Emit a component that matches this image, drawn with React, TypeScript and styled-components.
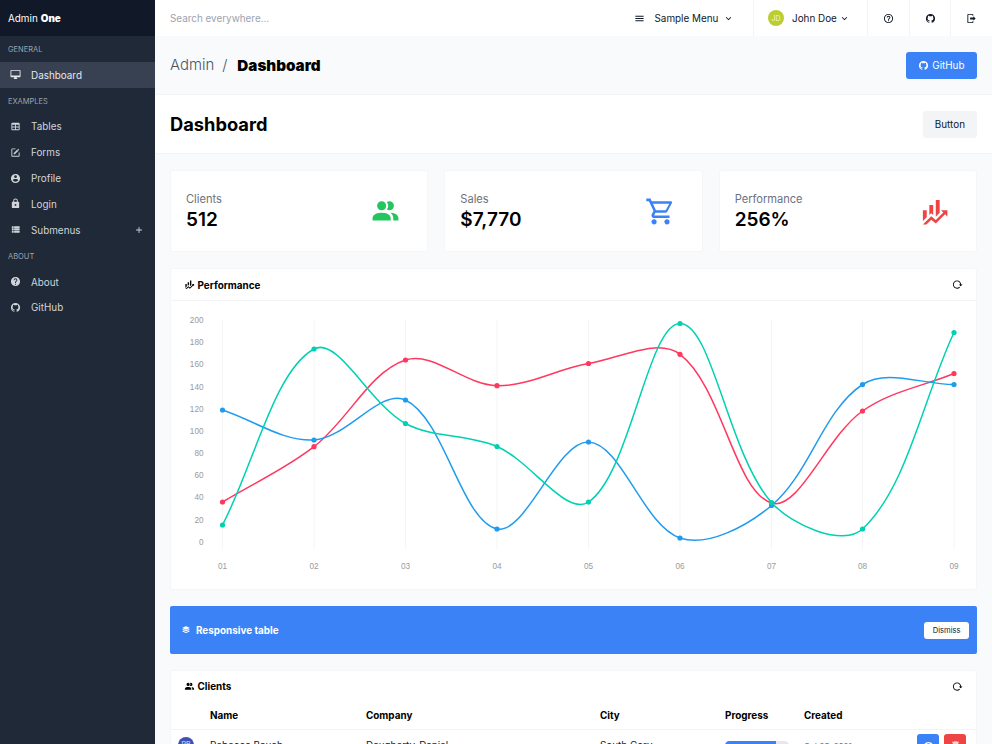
import React from 'react'
import styled, { createGlobalStyle } from 'styled-components'

const mdi = {
  desktop: 'M21,14H3V4H21M21,2H3C1.89,2 1,2.89 1,4V16A2,2 0 0,0 3,18H10L8,21V22H16V21L14,18H21A2,2 0 0,0 23,16V4C23,2.89 22.1,2 21,2Z',
  table: 'M5,4H19A2,2 0 0,1 21,6V18A2,2 0 0,1 19,20H5A2,2 0 0,1 3,18V6A2,2 0 0,1 5,4M5,8V12H11V8H5M13,8V12H19V8H13M5,14V18H11V14H5M13,14V18H19V14H13Z',
  edit: 'M5,3C3.89,3 3,3.89 3,5V19A2,2 0 0,0 5,21H19A2,2 0 0,0 21,19V12H19V19H5V5H12V3H5M17.78,4C17.61,4 17.43,4.07 17.3,4.2L16.08,5.41L18.58,7.91L19.8,6.7C20.06,6.44 20.06,6 19.8,5.75L18.25,4.2C18.12,4.07 17.95,4 17.78,4M15.37,6.12L8,13.5V16H10.5L17.87,8.62L15.37,6.12Z',
  account: 'M12,19.2C9.5,19.2 7.29,17.92 6,16C6.03,14 10,12.9 12,12.9C14,12.9 17.97,14 18,16C16.71,17.92 14.5,19.2 12,19.2M12,5A3,3 0 0,1 15,8A3,3 0 0,1 12,11A3,3 0 0,1 9,8A3,3 0 0,1 12,5M12,2A10,10 0 0,0 2,12A10,10 0 0,0 12,22A10,10 0 0,0 22,12C22,6.47 17.5,2 12,2Z',
  lock: 'M12,17A2,2 0 0,0 14,15C14,13.89 13.1,13 12,13A2,2 0 0,0 10,15A2,2 0 0,0 12,17M18,8A2,2 0 0,1 20,10V20A2,2 0 0,1 18,22H6A2,2 0 0,1 4,20V10C4,8.89 4.9,8 6,8H7V6A5,5 0 0,1 12,1A5,5 0 0,1 17,6V8H18M12,3A3,3 0 0,0 9,6V8H15V6A3,3 0 0,0 12,3Z',
  list: 'M9,5V9H21V5M9,19H21V15H9M9,14H21V10H9M4,9H8V5H4M4,19H8V15H4M4,14H8V10H4V14Z',
  help: 'M15.07,11.25L14.17,12.17C13.45,12.89 13,13.5 13,15H11V14.5C11,13.39 11.45,12.39 12.17,11.67L13.41,10.41C13.78,10.05 14,9.55 14,9C14,7.89 13.1,7 12,7A2,2 0 0,0 10,9H8A4,4 0 0,1 12,5A4,4 0 0,1 16,9C16,9.88 15.64,10.67 15.07,11.25M13,19H11V17H13M12,2A10,10 0 0,0 2,12A10,10 0 0,0 12,22A10,10 0 0,0 22,12C22,6.47 17.5,2 12,2Z',
  helpOutline: 'M11,18H13V16H11V18M12,2A10,10 0 0,0 2,12A10,10 0 0,0 12,22A10,10 0 0,0 22,12A10,10 0 0,0 12,2M12,20C7.59,20 4,16.41 4,12C4,7.59 7.59,4 12,4C16.41,4 20,7.59 20,12C20,16.41 16.41,20 12,20M12,6A4,4 0 0,0 8,10H10A2,2 0 0,1 12,8A2,2 0 0,1 14,10C14,12 11,11.75 11,15H13C13,12.75 16,12.5 16,10A4,4 0 0,0 12,6Z',
  github: 'M12,2A10,10 0 0,0 2,12C2,16.42 4.87,20.17 8.84,21.5C9.34,21.58 9.5,21.27 9.5,21C9.5,20.77 9.5,20.14 9.5,19.31C6.73,19.91 6.14,17.97 6.14,17.97C5.68,16.81 5.03,16.5 5.03,16.5C4.12,15.88 5.1,15.9 5.1,15.9C6.1,15.97 6.63,16.93 6.63,16.93C7.5,18.45 8.97,18 9.54,17.76C9.63,17.11 9.89,16.67 10.17,16.42C7.95,16.17 5.62,15.31 5.62,11.5C5.62,10.39 6,9.5 6.65,8.79C6.55,8.54 6.2,7.5 6.75,6.15C6.75,6.15 7.59,5.88 9.5,7.17C10.29,6.95 11.15,6.84 12,6.84C12.85,6.84 13.71,6.95 14.5,7.17C16.41,5.88 17.25,6.15 17.25,6.15C17.8,7.5 17.45,8.54 17.35,8.79C18,9.5 18.38,10.39 18.38,11.5C18.38,15.32 16.04,16.16 13.81,16.41C14.17,16.72 14.5,17.33 14.5,18.26C14.5,19.6 14.5,20.68 14.5,21C14.5,21.27 14.66,21.59 15.17,21.5C19.14,20.16 22,16.42 22,12A10,10 0 0,0 12,2Z',
  logout: 'M16,17V14H9V10H16V7L21,12L16,17M14,2A2,2 0 0,1 16,4V6H14V4H5V20H14V18H16V20A2,2 0 0,1 14,22H5A2,2 0 0,1 3,20V4A2,2 0 0,1 5,2H14Z',
  menu: 'M3,6H21V8H3V6M3,11H21V13H3V11M3,16H21V18H3V16Z',
  chevron: 'M7.41,8.58L12,13.17L16.59,8.58L18,10L12,16L6,10L7.41,8.58Z',
  plus: 'M19,13H13V19H11V13H5V11H11V5H13V11H19V13Z',
  people: 'M16 17V19H2V17S2 13 9 13 16 17 16 17M12.5 7.5A3.5 3.5 0 1 0 9 11A3.5 3.5 0 0 0 12.5 7.5M15.94 13A5.32 5.32 0 0 1 18 17V19H22V17S22 13.37 15.94 13M15 4A3.39 3.39 0 0 0 13.07 4.59A5 5 0 0 1 13.07 10.41A3.39 3.39 0 0 0 15 11A3.5 3.5 0 0 0 15 4Z',
  cart: 'M17,18A2,2 0 0,1 19,20A2,2 0 0,1 17,22C15.89,22 15,21.1 15,20C15,18.89 15.89,18 17,18M1,2H4.27L5.21,4H20A1,1 0 0,1 21,5C21,5.17 20.95,5.34 20.88,5.5L17.3,11.97C16.96,12.58 16.3,13 15.55,13H8.1L7.2,14.63L7.17,14.75A0.25,0.25 0 0,0 7.42,15H19V17H7C5.89,17 5,16.1 5,15C5,14.65 5.09,14.32 5.24,14.04L6.6,11.59L3,4H1V2M7,18A2,2 0 0,1 9,20A2,2 0 0,1 7,22C5.89,22 5,21.1 5,20C5,18.89 5.89,18 7,18M16,11L18.78,6H6.14L8.5,11H16Z',
  finance: 'M6,16.5L3,19.44V11H6M11,14.66L9.43,13.32L8,14.64V7H11M16,13L13,16V3H16M18.81,12.81L17,11H22V16L20.21,14.21L13,21.36L9.53,18.34L5.75,22H3L9.47,15.66L13,18.64',
  reload: 'M2 12C2 16.97 6.03 21 11 21C13.39 21 15.68 20.06 17.4 18.4L15.9 16.9C14.63 18.25 12.86 19 11 19C4.76 19 1.64 11.46 6.05 7.05C10.46 2.64 18 5.77 18 12H15L19 16H19.1L23 12H20C20 7.03 15.97 3 11 3C6.03 3 2 7.03 2 12Z',
  buffer: 'M12.6,2.86L20.66,6.63C21.1,6.85 21.1,7.15 20.66,7.37L12.6,11.14C12.21,11.32 11.79,11.32 11.4,11.14L3.34,7.37C2.9,7.15 2.9,6.85 3.34,6.63L11.4,2.86C11.79,2.68 12.21,2.68 12.6,2.86M3.34,10.6L5.2,9.75L11.4,12.65C11.79,12.83 12.21,12.83 12.6,12.65L18.8,9.75L20.66,10.6C21.1,10.85 21.1,11.15 20.66,11.4L12.6,15.14C12.21,15.32 11.79,15.32 11.4,15.14L3.34,11.4C2.9,11.15 2.9,10.85 3.34,10.6M3.34,14.6L5.2,13.75L11.4,16.65C11.79,16.83 12.21,16.83 12.6,16.65L18.8,13.75L20.66,14.6C21.1,14.85 21.1,15.15 20.66,15.4L12.6,19.14C12.21,19.32 11.79,19.32 11.4,19.14L3.34,15.4C2.9,15.15 2.9,14.85 3.34,14.6Z',
  eye: 'M12,9A3,3 0 0,0 9,12A3,3 0 0,0 12,15A3,3 0 0,0 15,12A3,3 0 0,0 12,9M12,17A5,5 0 0,1 7,12A5,5 0 0,1 12,7A5,5 0 0,1 17,12A5,5 0 0,1 12,17M12,4.5C7,4.5 2.73,7.61 1,12C2.73,16.39 7,19.5 12,19.5C17,19.5 21.27,16.39 23,12C21.27,7.61 17,4.5 12,4.5Z',
  trash: 'M19,4H15.5L14.5,3H9.5L8.5,4H5V6H19M6,19A2,2 0 0,0 8,21H16A2,2 0 0,0 18,19V7H6V19Z'
}

const GlobalStyle = createGlobalStyle`
  html, body {
    margin: 0;
    height: 100%;
    overflow: hidden;
  }
  body {
    font-family: Inter, "Liberation Sans", sans-serif;
    font-size: 9.9px;
    color: #000;
    background: #f9fafb;
  }
  #root {
    height: 100%;
  }
`

const Shell = styled.div`
  display: flex;
  height: 744px;
  overflow: hidden;
`

const Aside = styled.aside`
  width: 155px;
  flex: none;
  background: #1f2937;
  color: #d1d5db;
`

const Brand = styled.div`
  height: 36px;
  display: flex;
  align-items: center;
  padding-left: 8px;
  background: #111827;
  color: #fff;
  b {
    font-weight: 900;
    margin-left: 3px;
  }
`

const MenuLabel = styled.p`
  height: 25.85px;
  box-sizing: border-box;
  margin: 0;
  padding: 1px 0 0 8px;
  display: flex;
  align-items: center;
  font-size: 7.5px;
  color: #9ca3af;
  text-transform: uppercase;
`

const MenuItem = styled.a<{ $active?: boolean }>`
  height: 25.85px;
  display: flex;
  align-items: center;
  background: ${({ $active }) => ($active ? '#374151' : 'transparent')};
  color: ${({ $active }) => ($active ? '#e5e7eb' : '#d1d5db')};
`

const MenuIcon = styled.span`
  width: 31px;
  display: flex;
  justify-content: center;
`

const MenuPlus = styled.span`
  margin-left: auto;
  margin-right: 11px;
  display: flex;
`

const Main = styled.div`
  flex: 1;
  min-width: 0;
  display: flex;
  flex-direction: column;
`

const TopBar = styled.header`
  height: 36px;
  flex: none;
  display: flex;
  background: #fff;
`

const Search = styled.div`
  flex: 1;
  display: flex;
  align-items: center;
  padding-left: 15px;
  color: #9ca3af;
`

const TopItem = styled.div<{ $width: number; $divider?: boolean; $inset?: number }>`
  width: ${({ $width }) => $width}px;
  display: flex;
  align-items: center;
  justify-content: ${({ $inset }) => ($inset ? 'flex-start' : 'center')};
  padding-left: ${({ $inset }) => $inset || 0}px;
  border-left: ${({ $divider }) => ($divider ? '1px solid #f3f4f6' : 'none')};
  color: #111827;
  box-sizing: border-box;
`

const MenuName = styled.span`
  margin: 0 5px 0 10px;
`

const UserName = styled.span`
  margin-right: 2.5px;
`

const Avatar = styled.span`
  width: 16px;
  height: 16px;
  border-radius: 50%;
  background: #bccd31;
  color: #f4f7d0;
  font-size: 7px;
  display: flex;
  align-items: center;
  justify-content: center;
  margin-right: 8px;
`

const TitleBar = styled.section`
  height: 59px;
  box-sizing: border-box;
  flex: none;
  padding: 0 15px;
  display: flex;
  align-items: center;
  justify-content: space-between;
  border-bottom: 1px solid #f3f4f6;
`

const Crumbs = styled.div`
  font-size: 14.9px;
  font-weight: 300;
  color: #4b5563;
  display: flex;
  align-items: center;
  gap: 8px;
  b {
    margin-left: 2px;
    font-size: 15.2px;
    font-weight: 900;
    color: #000;
  }
`

const HeroBar = styled.section`
  height: 59px;
  box-sizing: border-box;
  flex: none;
  padding: 0 15px;
  display: flex;
  align-items: center;
  justify-content: space-between;
  background: #fff;
  border-bottom: 1px solid #f3f4f6;
  h1 {
    margin: 0;
    font-size: 18.3px;
    font-weight: 700;
  }
`

const Button = styled.button<{ $kind: 'blue' | 'light' | 'white' }>`
  font-family: inherit;
  font-size: ${({ $kind }) => ($kind === 'white' ? '7.6px' : '9.9px')};
  height: ${({ $kind }) => ($kind === 'white' ? '17px' : '27px')};
  padding: 0 ${({ $kind }) => ({ blue: '12.5px', light: '12px', white: '8.5px' }[$kind])};
  border: none;
  border-radius: 3px;
  display: flex;
  align-items: center;
  gap: 3px;
  background: ${({ $kind }) => ({ blue: '#3b82f6', light: '#f3f4f6', white: '#fff' }[$kind])};
  color: ${({ $kind }) => ($kind === 'blue' ? '#fff' : '#111827')};
`

const Content = styled.main`
  padding: 16px 15px;
  display: flex;
  flex-direction: column;
  gap: 16px;
`

const StatGrid = styled.div`
  display: grid;
  grid-template-columns: repeat(3, 1fr);
  gap: 16px;
`

const Card = styled.div`
  background: #fff;
  border: 1px solid #f5f6f7;
  border-radius: 2px;
`

const StatCard = styled(Card)`
  height: 82px;
  box-sizing: border-box;
  padding: 0 15px;
  display: flex;
  align-items: center;
  justify-content: space-between;
`

const StatLabel = styled.div`
  font-size: 11.1px;
  line-height: 17px;
  color: #6b7280;
`

const StatValue = styled.div`
  font-size: 19px;
  line-height: 23px;
  font-weight: 600;
`

const StatIcon = styled.span<{ $color: string }>`
  display: flex;
  margin-right: 11px;
  color: ${({ $color }) => $color};
`

const CardHead = styled.div`
  height: 31px;
  padding: 0 13px;
  display: flex;
  align-items: center;
  justify-content: space-between;
  border-bottom: 1px solid #f3f4f6;
`

const CardTitle = styled.div`
  display: flex;
  align-items: center;
  gap: 2.5px;
  font-weight: 700;
`

const ChartCard = styled(Card)`
  height: 322px;
  box-sizing: border-box;
`

const ChartSvg = styled.svg`
  display: block;
`

const Notice = styled.div`
  height: 48px;
  box-sizing: border-box;
  background: #3b82f6;
  border-radius: 2px;
  color: #fff;
  display: flex;
  align-items: center;
  justify-content: space-between;
  padding: 0 8px 0 11px;
`

const NoticeText = styled.div`
  display: flex;
  align-items: center;
  gap: 5px;
  font-weight: 700;
`

const ClientsCard = styled(Card)`
  border-bottom: none;
`

const ClientHead = styled(CardHead)`
  border-bottom: none;
  height: 30px;
`

const Table = styled.table`
  width: 100%;
  border-collapse: collapse;
  table-layout: fixed;
  th {
    height: 28px;
    padding: 0;
    text-align: left;
    font-weight: 700;
    border-bottom: 1px solid #f3f4f6;
  }
  td {
    height: 30px;
    padding: 0;
    color: #111827;
  }
`

const RowAvatar = styled.span`
  display: block;
  width: 16px;
  height: 16px;
  margin-left: 7px;
  border-radius: 50%;
  background: #3f51b5;
  color: #dfe3f7;
  font-size: 7px;
  line-height: 16px;
  text-align: center;
`

const Progress = styled.div`
  width: 64px;
  height: 9px;
  border-radius: 4.5px;
  background: #e5e7eb;
  overflow: hidden;
`

const ProgressFill = styled.div`
  height: 100%;
  background: #3b82f6;
`

const Muted = styled.small`
  font-size: 8px;
  color: #6b7280;
`

const Actions = styled.div`
  display: flex;
  justify-content: flex-end;
  gap: 5px;
  padding-right: 10px;
`

const ActionButton = styled.button<{ $color: string }>`
  width: 22px;
  height: 22px;
  padding: 0;
  border: none;
  border-radius: 3px;
  display: flex;
  align-items: center;
  justify-content: center;
  background: ${({ $color }) => $color};
  color: #fff;
`

const Icon = ({ path, size = 11 }: { path: string; size?: number }) => (
  <svg width={size} height={size} viewBox="0 0 24 24" fill="currentColor" style={{ display: 'block' }}>
    <path d={path} />
  </svg>
)

const menus = [
  { label: 'General', items: [{ name: 'Dashboard', icon: mdi.desktop, active: true }] },
  {
    label: 'Examples',
    items: [
      { name: 'Tables', icon: mdi.table },
      { name: 'Forms', icon: mdi.edit },
      { name: 'Profile', icon: mdi.account },
      { name: 'Login', icon: mdi.lock },
      { name: 'Submenus', icon: mdi.list, more: true }
    ]
  },
  {
    label: 'About',
    items: [
      { name: 'About', icon: mdi.help },
      { name: 'GitHub', icon: mdi.github }
    ]
  }
]

const stats = [
  { label: 'Clients', value: '512', icon: mdi.people, color: '#22c55e' },
  { label: 'Sales', value: '$7,770', icon: mdi.cart, color: '#3b82f6' },
  { label: 'Performance', value: '256%', icon: mdi.finance, color: '#ef4444' }
]

// pixel positions read off the chart, relative to the card body
const ORIGIN_X = 171
const ORIGIN_Y = 301
const xs = [222.5, 314, 405.5, 497, 588.5, 680, 771.5, 862.5, 954].map((x) => x - ORIGIN_X)
const series = [
  { color: '#ff3860', ys: [502, 446.7, 360, 385.7, 363.5, 354.3, 503, 411, 373.5] },
  { color: '#209cee', ys: [410, 440, 400, 529, 442, 538, 505.5, 384.5, 384.5] },
  { color: '#00d1b2', ys: [525, 349, 423.5, 446.5, 502, 323.5, 502.5, 529, 332.5] }
].map((s) => ({ ...s, ys: s.ys.map((y) => y - ORIGIN_Y) }))

// same spline Chart.js uses for a tensioned line
function splinePath(ys: number[], tension = 0.35) {
  const pts = ys.map((y, i) => [xs[i], y])
  const out: number[][] = pts.map((p, i) => {
    const prev = pts[i - 1] || p
    const next = pts[i + 1] || p
    const d01 = Math.hypot(p[0] - prev[0], p[1] - prev[1])
    const d12 = Math.hypot(next[0] - p[0], next[1] - p[1])
    const s01 = d01 / (d01 + d12 || 1)
    const s12 = d12 / (d01 + d12 || 1)
    return [
      p[0] - tension * s01 * (next[0] - prev[0]),
      p[1] - tension * s01 * (next[1] - prev[1]),
      p[0] + tension * s12 * (next[0] - prev[0]),
      p[1] + tension * s12 * (next[1] - prev[1])
    ]
  })
  return pts
    .map((p, i) =>
      i === 0
        ? `M${p[0]} ${p[1]}`
        : `C${out[i - 1][2]} ${out[i - 1][3]} ${out[i][0]} ${out[i][1]} ${p[0]} ${p[1]}`
    )
    .join('')
}

const Chart = () => (
  <ChartSvg width="804" height="289">
    {xs.map((x) => (
      <line key={x} x1={x} x2={x} y1={19} y2={248} stroke="#f5f5f6" />
    ))}
    {[200, 180, 160, 140, 120, 100, 80, 60, 40, 20, 0].map((v) => (
      <text
        key={v}
        x={32.5}
        y={240.7 - v * 1.108 + 3}
        textAnchor="end"
        fontSize="8.2"
        fontFamily="Liberation Sans, sans-serif"
        fill="#9a9a9a"
      >
        {v}
      </text>
    ))}
    {xs.map((x, i) => (
      <text
        key={x}
        x={x}
        y={268}
        textAnchor="middle"
        fontSize="8.2"
        fontFamily="Liberation Sans, sans-serif"
        fill="#9a9a9a"
      >
        {`0${i + 1}`}
      </text>
    ))}
    {series.map((s) => (
      <g key={s.color}>
        <path d={splinePath(s.ys)} fill="none" stroke={s.color} strokeWidth="1.5" />
        {s.ys.map((y, i) => (
          <circle key={i} cx={xs[i]} cy={y} r="2.6" fill={s.color} />
        ))}
      </g>
    ))}
  </ChartSvg>
)

export default function App() {
  return (
    <Shell>
      <GlobalStyle />
      <Aside>
        <Brand>
          Admin <b>One</b>
        </Brand>
        {menus.map((menu) => (
          <React.Fragment key={menu.label}>
            <MenuLabel>{menu.label}</MenuLabel>
            {menu.items.map((item: any) => (
              <MenuItem key={item.name} $active={item.active}>
                <MenuIcon>
                  <Icon path={item.icon} />
                </MenuIcon>
                {item.name}
                {item.more && (
                  <MenuPlus>
                    <Icon path={mdi.plus} size={10} />
                  </MenuPlus>
                )}
              </MenuItem>
            ))}
          </React.Fragment>
        ))}
      </Aside>
      <Main>
        <TopBar>
          <Search>Search everywhere...</Search>
          <TopItem $width={133} $inset={13.5}>
            <Icon path={mdi.menu} />
            <MenuName>Sample Menu</MenuName>
            <Icon path={mdi.chevron} />
          </TopItem>
          <TopItem $width={114} $divider $inset={14}>
            <Avatar>JD</Avatar>
            <UserName>John Doe</UserName>
            <Icon path={mdi.chevron} />
          </TopItem>
          <TopItem $width={42} $divider>
            <Icon path={mdi.helpOutline} />
          </TopItem>
          <TopItem $width={41} $divider>
            <Icon path={mdi.github} />
          </TopItem>
          <TopItem $width={42} $divider>
            <Icon path={mdi.logout} />
          </TopItem>
        </TopBar>
        <TitleBar>
          <Crumbs>
            <span>Admin</span>
            <span>/</span>
            <b>Dashboard</b>
          </Crumbs>
          <Button $kind="blue">
            <Icon path={mdi.github} />
            GitHub
          </Button>
        </TitleBar>
        <HeroBar>
          <h1>Dashboard</h1>
          <Button $kind="light">Button</Button>
        </HeroBar>
        <Content>
          <StatGrid>
            {stats.map((stat) => (
              <StatCard key={stat.label}>
                <div>
                  <StatLabel>{stat.label}</StatLabel>
                  <StatValue>{stat.value}</StatValue>
                </div>
                <StatIcon $color={stat.color}>
                  <Icon path={stat.icon} size={31} />
                </StatIcon>
              </StatCard>
            ))}
          </StatGrid>
          <ChartCard>
            <CardHead>
              <CardTitle>
                <Icon path={mdi.finance} />
                Performance
              </CardTitle>
              <Icon path={mdi.reload} />
            </CardHead>
            <Chart />
          </ChartCard>
          <Notice>
            <NoticeText>
              <Icon path={mdi.buffer} size={10} />
              Responsive table
            </NoticeText>
            <Button $kind="white">Dismiss</Button>
          </Notice>
          <ClientsCard>
            <ClientHead>
              <CardTitle>
                <Icon path={mdi.people} />
                Clients
              </CardTitle>
              <Icon path={mdi.reload} />
            </ClientHead>
            <Table>
              <colgroup>
                <col style={{ width: 39 }} />
                <col style={{ width: 156 }} />
                <col style={{ width: 234 }} />
                <col style={{ width: 125 }} />
                <col style={{ width: 79 }} />
                <col style={{ width: 80 }} />
                <col />
              </colgroup>
              <thead>
                <tr>
                  <th />
                  <th>Name</th>
                  <th>Company</th>
                  <th>City</th>
                  <th>Progress</th>
                  <th>Created</th>
                  <th />
                </tr>
              </thead>
              <tbody>
                <tr>
                  <td>
                    <RowAvatar>RB</RowAvatar>
                  </td>
                  <td>Rebecca Bauch</td>
                  <td>Daugherty-Daniel</td>
                  <td>South Cory</td>
                  <td>
                    <Progress>
                      <ProgressFill style={{ width: '79%' }} />
                    </Progress>
                  </td>
                  <td>
                    <Muted>Oct 25, 2021</Muted>
                  </td>
                  <td>
                    <Actions>
                      <ActionButton $color="#3b82f6">
                        <Icon path={mdi.eye} />
                      </ActionButton>
                      <ActionButton $color="#ef4444">
                        <Icon path={mdi.trash} />
                      </ActionButton>
                    </Actions>
                  </td>
                </tr>
              </tbody>
            </Table>
          </ClientsCard>
        </Content>
      </Main>
    </Shell>
  )
}
